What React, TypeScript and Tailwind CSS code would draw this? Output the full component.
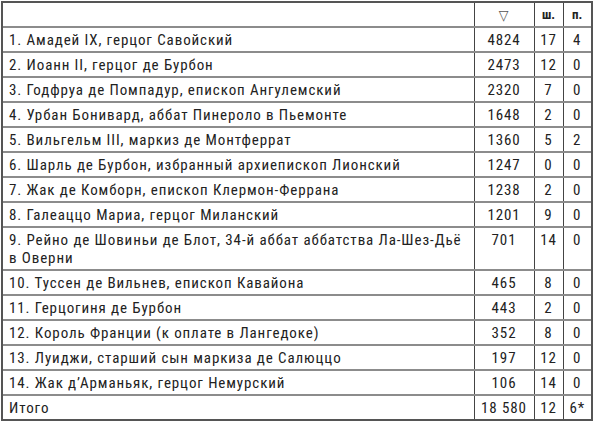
import React from "react";

const data: [React.ReactNode, string, string, string][] = [
  ["1. Амадей IX, герцог Савойский", "4824", "17", "4"],
  ["2. Иоанн II, герцог де Бурбон", "2473", "12", "0"],
  ["3. Годфруа де Помпадур, епископ Ангулемский", "2320", "7", "0"],
  ["4. Урбан Бонивард, аббат Пинероло в Пьемонте", "1648", "2", "0"],
  ["5. Вильгельм III, маркиз де Монтферрат", "1360", "5", "2"],
  ["6. Шарль де Бурбон, избранный архиепископ Лионский", "1247", "0", "0"],
  ["7. Жак де Комборн, епископ Клермон-Феррана", "1238", "2", "0"],
  ["8. Галеаццо Мариа, герцог Миланский", "1201", "9", "0"],
  [
    <>
      <span className="whitespace-nowrap">9. Рейно де Шовиньи де Блот, 34-й аббат аббатства Ла-Шез-Дьё</span>
      <br />в Оверни
    </>,
    "701",
    "14",
    "0",
  ],
  ["10. Туссен де Вильнев, епископ Кавайона", "465", "8", "0"],
  ["11. Герцогиня де Бурбон", "443", "2", "0"],
  ["12. Король Франции (к оплате в Лангедоке)", "352", "8", "0"],
  ["13. Луиджи, старший сын маркиза де Салюццо", "197", "12", "0"],
  ["14. Жак д’Арманьяк, герцог Немурский", "106", "14", "0"],
  ["Итого", "18 580", "12", "6*"],
];

export default function App() {
  return (
    <div className="w-[593px] h-[421px] bg-white pt-[1px] pl-[1px] overflow-hidden">
      <table
        className="border-collapse table-fixed w-[590px] text-[#222] text-[15px] tracking-[0.9px]"
        style={{ fontFamily: '"Roboto Condensed", "Liberation Sans Narrow", "Arial Narrow", "DejaVu Sans Condensed", sans-serif' }}
      >
        <colgroup>
          <col className="w-[472px]" />
          <col className="w-[60px]" />
          <col className="w-[29px]" />
          <col className="w-[29px]" />
        </colgroup>
        <tbody>
          <tr className="h-[25px] border-b-2 border-[#8c8c8c]">
            <td className="border-l-2 border-t-2 border-[#555] border-r border-r-[#444] p-0"></td>
            <td className="border-t-2 border-[#555] border-r border-r-[#444] text-center text-[14px] text-[#555] leading-none p-0">▽</td>
            <td className="border-t-2 border-[#555] border-r border-r-[#444] text-center font-bold text-[13px] tracking-normal p-0">ш.</td>
            <td className="border-t-2 border-r-2 border-[#555] text-center font-bold text-[13px] tracking-normal p-0">п.</td>
          </tr>
          {data.map((r, i) => {
            const last = i === data.length - 1;
            const tall = i === 8;
            const v = tall ? "align-top pt-[3px] " : "align-middle ";
            return (
              <tr
                key={i}
                className={
                  (tall ? "h-[43px] " : "h-[25px] ") +
                  (last ? "border-b-2 border-[#555]" : "border-b-2 border-[#8c8c8c]")
                }
              >
                <td className={"border-l-2 border-l-[#555] border-r border-r-[#444] pl-[6px] pr-0 leading-[18px] " + v}>
                  {r[0]}
                </td>
                <td className={"border-r border-r-[#444] text-center leading-[18px] px-0 " + v}>{r[1]}</td>
                <td className={"border-r border-r-[#444] text-center leading-[18px] px-0 " + v}>{r[2]}</td>
                <td className={"border-r-2 border-r-[#555] text-center leading-[18px] px-0 " + v}>{r[3]}</td>
              </tr>
            );
          })}
        </tbody>
      </table>
    </div>
  );
}
